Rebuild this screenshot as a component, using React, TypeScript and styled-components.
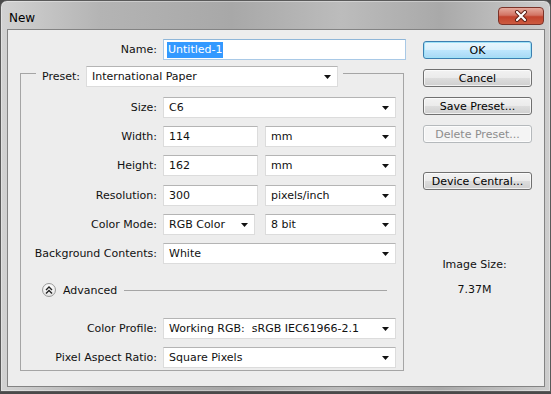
import React from 'react';
import styled, { createGlobalStyle } from 'styled-components';

const GlobalStyle = createGlobalStyle`
  html, body {
    margin: 0;
    padding: 0;
    background: #4a4a4a;
  }
  body {
    font-family: "DejaVu Sans", "Liberation Sans", sans-serif;
    font-size: 11px;
    color: #111;
  }
`;

const Window = styled.div`
  width: 551px;
  height: 392px;
  box-sizing: border-box;
  display: flex;
  flex-direction: column;
  border: 1px solid #5a5a5a;
  border-radius: 7px 7px 0 0;
  padding: 0 5px 4px 6px;
  background: linear-gradient(90deg, #d2d2d2 0%, #b4b4b4 18%, #a8a8a8 42%, #bcbcbc 62%, #a9a9a9 80%, #cdcdcd 100%);
  box-shadow: inset 0 0 0 1px rgba(255, 255, 255, 0.35);
`;

const TitleBar = styled.div`
  height: 28px;
  display: flex;
  justify-content: space-between;
  align-items: flex-start;
`;

const Title = styled.div`
  font-size: 12px;
  padding: 10px 0 0 2px;
  color: #000;
`;

const CloseButton = styled.div`
  width: 46px;
  height: 18px;
  margin-top: 6px;
  margin-right: 1px;
  box-sizing: border-box;
  display: flex;
  align-items: center;
  justify-content: center;
  border: 1px solid #7b3329;
  border-radius: 4px;
  background: linear-gradient(#e6a99c 0%, #d27363 45%, #c2432d 55%, #cc5b40 100%);
`;

const Client = styled.div`
  flex: 1;
  display: flex;
  border: 1px solid #838383;
  background: #ededed;
`;

const FormColumn = styled.div`
  width: 399px;
  padding-top: 9px;
`;

const NameRow = styled.div`
  display: flex;
  align-items: center;
  gap: 6px;
`;

const Label = styled.div<{ $w: number }>`
  width: ${(p) => p.$w}px;
  flex: none;
  text-align: right;
  white-space: nowrap;
`;

const Field = styled.div<{ $w: number; $focus?: boolean }>`
  width: ${(p) => p.$w}px;
  height: 21px;
  box-sizing: border-box;
  flex: none;
  display: flex;
  align-items: center;
  justify-content: space-between;
  padding: 0 6px 0 5px;
  background: #fff;
  border: 1px solid ${(p) => (p.$focus ? '#a9c9e6' : '#dcdcdc')};
  border-top-color: ${(p) => (p.$focus ? '#8fb6d8' : '#b4b4b4')};
  white-space: pre;
`;

const Selected = styled.span`
  background: #3399ff;
  color: #fff;
  padding: 1px 1px 2px;
  margin-left: -2px;
`;

const GroupBox = styled.div`
  width: 384px;
  margin: 6px 0 0 12px;
`;

const GroupHead = styled.div`
  display: flex;
  align-items: flex-start;
  height: 21px;
`;

const GroupCorner = styled.div`
  width: 16px;
  height: 14px;
  margin-top: 7px;
  box-sizing: border-box;
  border-top: 1px solid #a5a5a5;
  border-left: 1px solid #a5a5a5;
`;

const HeadControls = styled.div`
  display: flex;
  align-items: center;
  gap: 6px;
  height: 21px;
`;

const GroupTail = styled.div`
  flex: 1;
  height: 14px;
  margin: 7px 0 0 5px;
  box-sizing: border-box;
  border-top: 1px solid #a5a5a5;
  border-right: 1px solid #a5a5a5;
`;

const GroupBody = styled.div`
  border: 1px solid #a5a5a5;
  border-top: none;
  padding: 10px 0 2px;
`;

const Rows = styled.div`
  display: flex;
  flex-direction: column;
  gap: 8px;
`;

const Row = styled.div<{ $nudge?: number }>`
  display: flex;
  align-items: center;
  gap: 6px;
  margin-top: ${(p) => p.$nudge ?? 0}px;
`;

const Pair = styled.div`
  display: flex;
  gap: 7px;
`;

const AdvancedRow = styled.div`
  display: flex;
  align-items: center;
  margin: 19px 16px 21px 21px;
  height: 14px;
`;

const RoundButton = styled.div`
  width: 14px;
  height: 14px;
  box-sizing: border-box;
  border-radius: 50%;
  border: 1px solid #9a9a9a;
  background: radial-gradient(circle at 50% 30%, #ffffff 0%, #f0f0f0 55%, #d4d4d4 100%);
  display: flex;
  align-items: center;
  justify-content: center;
`;

const AdvancedText = styled.span`
  margin-left: 7px;
`;

const AdvancedLine = styled.div`
  flex: 1;
  margin-left: 7px;
  border-top: 1px solid #a5a5a5;
`;

const ButtonColumn = styled.div`
  margin-left: 16px;
  padding-top: 11px;
  width: 109px;
  display: flex;
  flex-direction: column;
`;

const DialogButton = styled.div<{ $primary?: boolean; $disabled?: boolean; $gap?: number }>`
  height: 18px;
  margin-bottom: ${(p) => p.$gap ?? 10}px;
  box-sizing: border-box;
  border-radius: 3px;
  display: flex;
  align-items: center;
  justify-content: center;
  border: 1px solid ${(p) => (p.$primary ? '#3c7fb1' : p.$disabled ? '#b5b9bc' : '#707070')};
  color: ${(p) => (p.$disabled ? '#8d8d8d' : '#000')};
  background: ${(p) =>
    p.$primary
      ? 'linear-gradient(#eaf6fd 0%, #d9f0fc 50%, #bee6fd 51%, #a7d9f5 100%)'
      : p.$disabled
      ? '#f4f4f4'
      : 'linear-gradient(#f2f2f2 0%, #ebebeb 50%, #dddddd 51%, #cfcfcf 100%)'};
  box-shadow: ${(p) => (p.$primary ? 'inset 0 0 0 1px #9fe2f7' : 'inset 0 0 0 1px rgba(255,255,255,0.7)')};
`;

const InfoBlock = styled.div`
  margin-top: 58px;
  margin-left: -6px;
  display: flex;
  flex-direction: column;
  align-items: center;
  gap: 12px;
`;

const Arrow = () => (
  <svg width="7" height="4" viewBox="0 0 7 4">
    <path d="M0 0h7L3.5 4z" fill="#111" />
  </svg>
);

const Select = ({ w, value }: { w: number; value: string }) => (
  <Field $w={w}>
    <span>{value}</span>
    <Arrow />
  </Field>
);

const rowsTop: Array<[string, React.ReactNode, number?]> = [
  ['Size:', <Select w={233} value="C6" />],
  [
    'Width:',
    <Pair>
      <Field $w={95}>114</Field>
      <Select w={131} value="mm" />
    </Pair>,
  ],
  [
    'Height:',
    <Pair>
      <Field $w={95}>162</Field>
      <Select w={131} value="mm" />
    </Pair>,
  ],
  [
    'Resolution:',
    <Pair>
      <Field $w={95}>300</Field>
      <Select w={131} value="pixels/inch" />
    </Pair>,
    1,
  ],
  [
    'Color Mode:',
    <Pair>
      <Select w={92} value="RGB Color" />
      <span style={{ marginLeft: 3 }}>
        <Select w={131} value="8 bit" />
      </span>
    </Pair>,
  ],
  ['Background Contents:', <Select w={233} value="White" />],
];

const rowsBottom: Array<[string, React.ReactNode]> = [
  ['Color Profile:', <Select w={233} value={'Working RGB:  sRGB IEC61966-2.1'} />],
  ['Pixel Aspect Ratio:', <Select w={233} value="Square Pixels" />],
];

export default function App() {
  return (
    <>
      <GlobalStyle />
      <Window>
        <TitleBar>
          <Title>New</Title>
          <CloseButton>
            <svg width="14" height="12" viewBox="0 0 14 12">
              <path
                d="M3 2l8 8M11 2l-8 8"
                stroke="#5a1e14"
                strokeWidth="4"
                strokeLinecap="round"
              />
              <path d="M3 2l8 8M11 2l-8 8" stroke="#fff" strokeWidth="2.2" strokeLinecap="round" />
            </svg>
          </CloseButton>
        </TitleBar>
        <Client>
          <FormColumn>
            <NameRow>
              <Label $w={149}>Name:</Label>
              <Field $w={243} $focus>
                <span>
                  <Selected>Untitled-1</Selected>
                </span>
              </Field>
            </NameRow>
            <GroupBox>
              <GroupHead>
                <GroupCorner />
                <HeadControls>
                  <Label $w={44}>Preset:</Label>
                  <Select w={252} value="International Paper" />
                </HeadControls>
                <GroupTail />
              </GroupHead>
              <GroupBody>
                <Rows>
                  {rowsTop.map(([label, control, nudge]) => (
                    <Row key={label} $nudge={nudge}>
                      <Label $w={136}>{label}</Label>
                      {control}
                    </Row>
                  ))}
                </Rows>
                <AdvancedRow>
                  <RoundButton>
                    <svg width="8" height="8" viewBox="0 0 8 8">
                      <path d="M1 4l3-3 3 3M1 7.5l3-3 3 3" fill="none" stroke="#222" strokeWidth="1.4" />
                    </svg>
                  </RoundButton>
                  <AdvancedText>Advanced</AdvancedText>
                  <AdvancedLine />
                </AdvancedRow>
                <Rows>
                  {rowsBottom.map(([label, control]) => (
                    <Row key={label}>
                      <Label $w={136}>{label}</Label>
                      {control}
                    </Row>
                  ))}
                </Rows>
              </GroupBody>
            </GroupBox>
          </FormColumn>
          <ButtonColumn>
            <DialogButton $primary>OK</DialogButton>
            <DialogButton>Cancel</DialogButton>
            <DialogButton>Save Preset...</DialogButton>
            <DialogButton $disabled $gap={29}>Delete Preset...</DialogButton>
            <DialogButton>Device Central...</DialogButton>
            <InfoBlock>
              <span>Image Size:</span>
              <span>7.37M</span>
            </InfoBlock>
          </ButtonColumn>
        </Client>
      </Window>
    </>
  );
}
